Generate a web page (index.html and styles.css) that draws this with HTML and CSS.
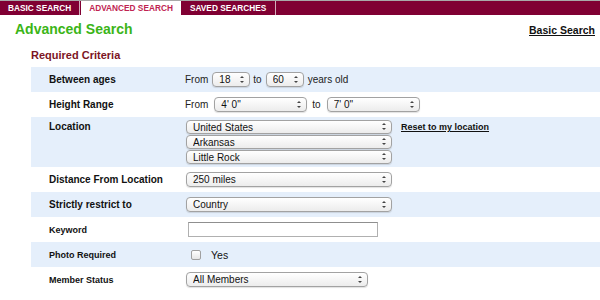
FILE: index.html
```html
<!DOCTYPE html>
<html lang="en">
  <head>
    <meta charset="UTF-8" />
    <meta name="viewport" content="width=device-width, initial-scale=1.0" />
    <title>Advanced Search</title>
    <link rel="stylesheet" href="styles.css">
  </head>
  <body>
    <nav class="tabs">
      <a class="tab" href="#">Basic Search</a>
      <a class="tab active" href="#">Advanced Search</a>
      <a class="tab" href="#">Saved Searches</a>
    </nav>

    <header class="title-bar">
      <h1 class="title">Advanced Search</h1>
      <a class="switch" href="#">Basic Search</a>
    </header>

    <section class="criteria">
      <h2 class="subtitle">Required Criteria</h2>

      <div class="row shade">
        <div class="label">Between ages</div>
        <div class="field ages">
          <span>From</span>
          <span class="sel w-age"><select><option>18</option></select></span>
          <span>to</span>
          <span class="sel w-age"><select><option>60</option></select></span>
          <span>years old</span>
        </div>
      </div>

      <div class="row">
        <div class="label">Height Range</div>
        <div class="field heights">
          <span>From</span>
          <span class="sel w-height"><select><option>4' 0"</option></select></span>
          <span>to</span>
          <span class="sel w-height"><select><option>7' 0"</option></select></span>
        </div>
      </div>

      <div class="row shade tall">
        <div class="label">Location</div>
        <div class="field location">
          <div class="stack">
            <span class="sel w-wide short"><select><option>United States</option></select></span>
            <span class="sel w-wide short"><select><option>Arkansas</option></select></span>
            <span class="sel w-wide short"><select><option>Little Rock</option></select></span>
          </div>
          <a class="reset" href="#">Reset to my location</a>
        </div>
      </div>

      <div class="row">
        <div class="label">Distance From Location</div>
        <div class="field">
          <span class="sel w-wide"><select><option>250 miles</option></select></span>
        </div>
      </div>

      <div class="row shade">
        <div class="label">Strictly restrict to</div>
        <div class="field">
          <span class="sel w-wide"><select><option>Country</option></select></span>
        </div>
      </div>

      <div class="row">
        <div class="label small">Keyword</div>
        <div class="field">
          <input class="keyword" type="text">
        </div>
      </div>

      <div class="row shade">
        <div class="label small">Photo Required</div>
        <div class="field">
          <label class="check"><input type="checkbox"> <span>Yes</span></label>
        </div>
      </div>

      <div class="row">
        <div class="label small">Member Status</div>
        <div class="field">
          <span class="sel w-member"><select><option>All Members</option></select></span>
        </div>
      </div>
    </section>
  </body>
</html>
```

FILE: styles.css
```css
* {
  margin: 0;
  padding: 0;
  box-sizing: border-box;
  font-family: "Liberation Sans", Arial, sans-serif;
}

body {
  background: #fff;
  color: #111;
}

/* tabs */
.tabs {
  display: flex;
  height: 15px;
  border-top: 1px solid #a9a9a9;
  background-color: #800033;
}
.tab {
  padding: 0 8px;
  line-height: 14px;
  font-size: 8.3px;
  font-weight: bold;
  text-transform: uppercase;
  text-decoration: none;
  color: #fff;
  border-right: 1px solid #d2aebb;
}
.tab:last-child {
  padding: 0 9px;
}
.tab.active {
  background-color: #fff;
  color: #c02451;
  border-right: none;
  margin-left: 1px;
}

/* title */
.title-bar {
  display: flex;
  justify-content: space-between;
  align-items: baseline;
  padding: 6px 5px 0 15px;
}
.title {
  font-size: 14px;
  line-height: 16px;
  color: #3bb517;
}
.switch {
  font-size: 10.5px;
  font-weight: bold;
  color: #111;
}

/* criteria */
.criteria {
  margin-left: 31px;
}
.subtitle {
  margin: 12px 0 5px;
  font-size: 11px;
  line-height: 13px;
  color: #7c1424;
}
.row {
  display: flex;
  align-items: center;
  height: 25px;
  padding-left: 18px;
}
.row.shade {
  background-color: #e5effb;
}
.row.tall {
  height: 50px;
  align-items: flex-start;
  padding-top: 3px;
}
.label {
  width: 136px;
  font-size: 10px;
  line-height: 14px;
  font-weight: bold;
  color: #111;
}
.label.small {
  font-size: 9px;
}
.field {
  display: flex;
  align-items: center;
  font-size: 10px;
  color: #222;
}
.ages {
  gap: 3px;
}
.ages span:last-child {
  margin-left: 1px;
}
.heights {
  gap: 5px;
}
.location {
  align-items: flex-start;
}
.stack {
  display: flex;
  flex-direction: column;
  gap: 1px;
}
.reset {
  margin-left: 9px;
  font-size: 9px;
  line-height: 14px;
  font-weight: bold;
  color: #111;
}

/* select boxes */
.sel {
  position: relative;
  display: inline-block;
  height: 15px;
  margin-left: 1px;
}
.sel.short {
  height: 14px;
}
.sel::before,
.sel::after {
  content: "";
  position: absolute;
  right: 6px;
  top: 50%;
  border-left: 2px solid transparent;
  border-right: 2px solid transparent;
  pointer-events: none;
}
.sel::before {
  margin-top: -4px;
  border-bottom: 2px solid #444;
}
.sel::after {
  margin-top: 1px;
  border-top: 2px solid #444;
}
.sel select {
  appearance: none;
  -webkit-appearance: none;
  width: 100%;
  height: 100%;
  padding: 0 14px 0 6px;
  border: 1px solid #a2a2a2;
  border-radius: 4px;
  background: linear-gradient(#ffffff, #ececec);
  box-shadow: 0 1px 1px rgba(0, 0, 0, 0.12);
  font-size: 10px;
  color: #111;
  outline: none;
}
.w-age {
  width: 38px;
}
.w-height {
  width: 93px;
}
.w-wide {
  width: 206px;
}
.w-member {
  width: 182px;
}

/* inputs */
.keyword {
  width: 190px;
  height: 15px;
  margin-left: 3px;
  border: 1px solid #b0b0b0;
  border-top-color: #8f8f8f;
  background: #fff;
  outline: none;
}
.check {
  display: flex;
  align-items: center;
  font-size: 10.5px;
  color: #111;
}
.check input {
  appearance: none;
  -webkit-appearance: none;
  width: 10px;
  height: 10px;
  margin: 0 10px 0 6px;
  border: 1px solid #a0a0a0;
  border-radius: 2px;
  background: linear-gradient(#ffffff, #e6e6e6);
}
```
